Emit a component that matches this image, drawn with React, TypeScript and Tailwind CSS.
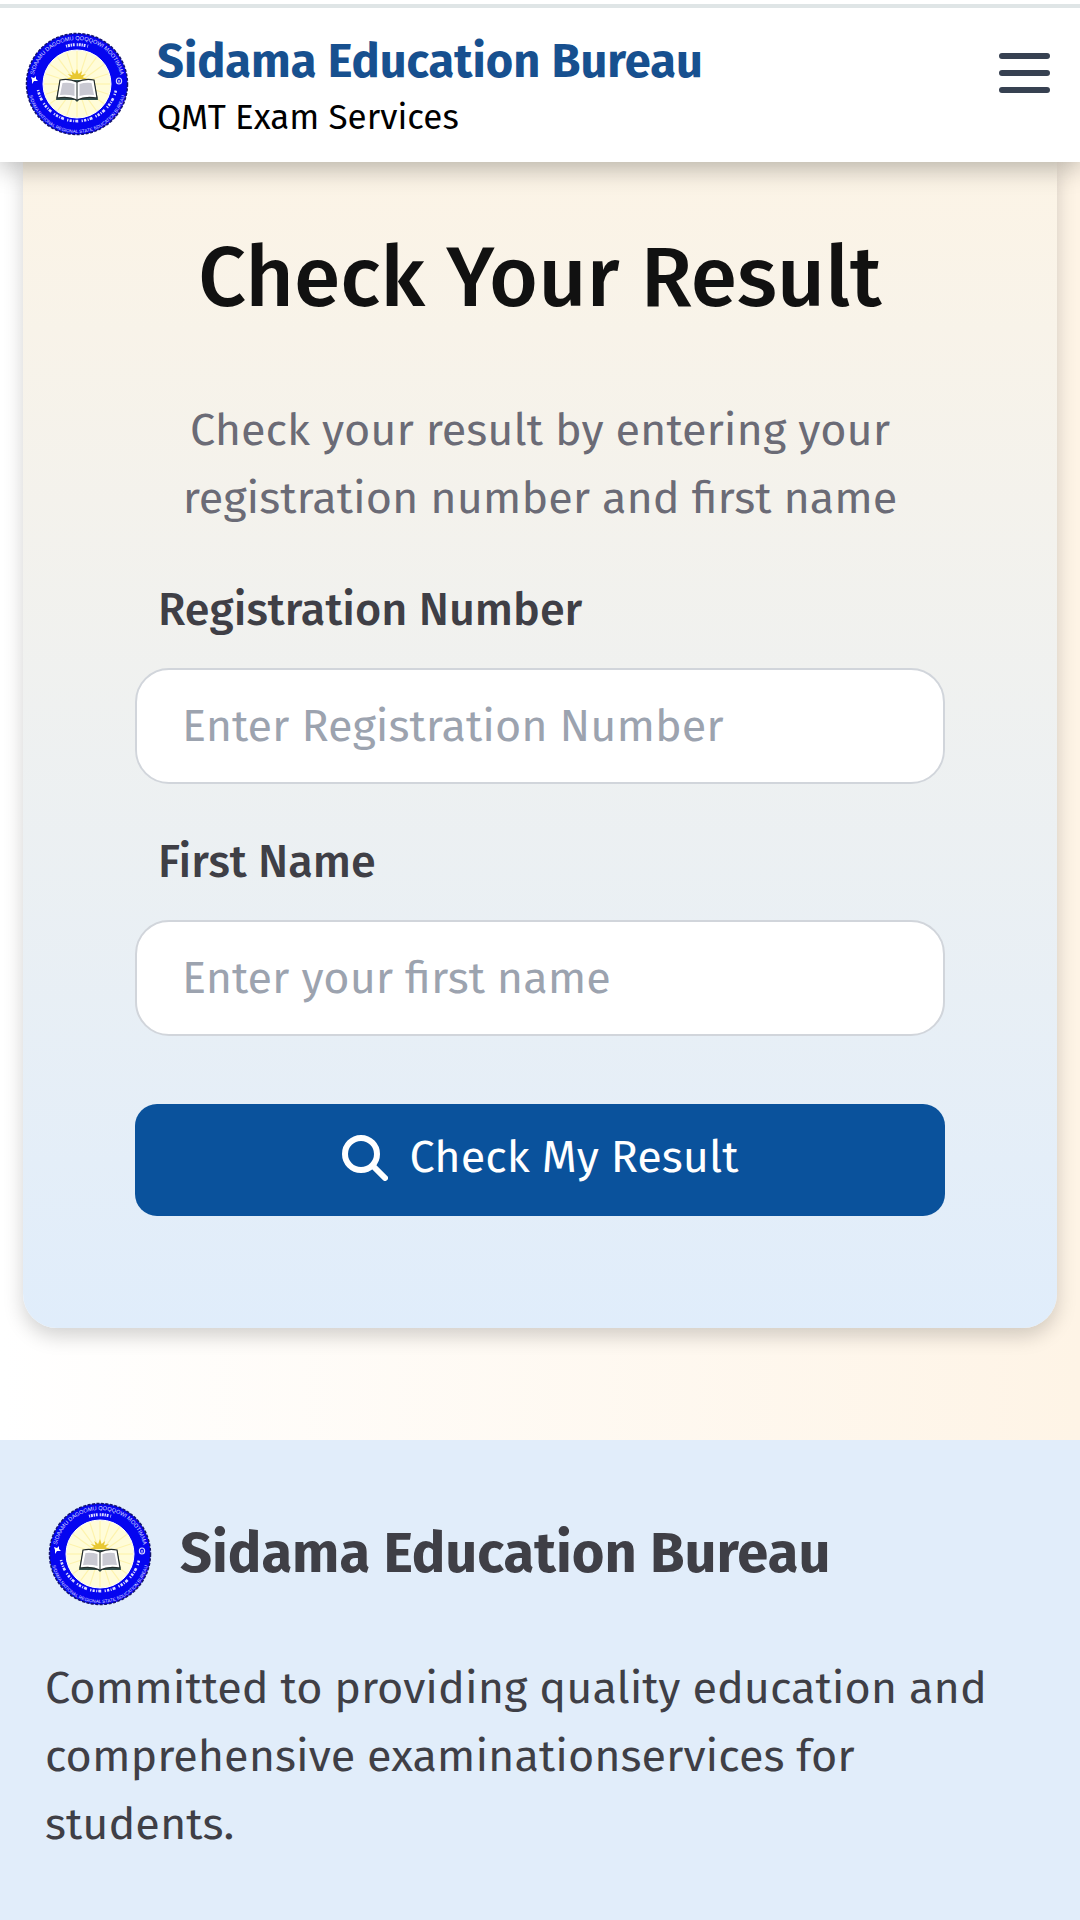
import { useState } from "react";

interface LogoProps {
  id: string;
}

const rays = [0, 18, 36, 54, 72, 90, 108, 126, 144, 162, 180, 198, 216, 234, 252, 270, 288, 306, 324, 342];

const Logo: React.FC<LogoProps> = ({ id }) => {
  return (
    <svg viewBox="0 0 104 104" className="size-26 shrink-0" aria-hidden="true">
      <defs>
        <path id={`${id}-top`} d="M8 52a44 44 0 0 1 88 0" />
        <path id={`${id}-bottom`} d="M3 52a49 49 0 0 0 98 0" />
      </defs>
      <circle cx="52" cy="52" r="50.5" fill="#0505f0" />
      <circle cx="52" cy="52" r="50.5" fill="none" stroke="#15156e" strokeWidth="1.5" strokeDasharray="3 1.5" />
      <circle cx="52" cy="52" r="34" fill="#fffcd9" stroke="#fff" strokeWidth="1" />
      {rays.map((a) => (
        <path key={a} d="M52 47V19" stroke="#fdf3ae" strokeWidth="1.2" transform={`rotate(${a} 52 52)`} />
      ))}
      <g fill="#dcdcff" fontFamily="Liberation Sans, sans-serif" fontWeight="400" textAnchor="middle">
        <text fontSize="5.6">
          <textPath href={`#${id}-top`} startOffset="50%">SIDAAMU DAGOOMU QOQQOWI MOOTIMMA</textPath>
        </text>
        <text fontSize="4.6">
          <textPath href={`#${id}-bottom`} startOffset="50%">SIDAMA NATIONAL REGIONAL STATE EDUCATION BUREAU</textPath>
        </text>
      </g>
      <path
        d="M41 14.2A39.5 39.5 0 0 1 63 14.2"
        fill="none"
        stroke="#dcdcff"
        strokeWidth="3"
        strokeDasharray="1.2 0.8 2 0.8 1.4 0.8 1.8 2"
      />
      <path
        d="M13 58A40 40 0 0 0 91 58"
        fill="none"
        stroke="#dcdcff"
        strokeWidth="2.6"
        strokeDasharray="1.2 1.3 2.2 1.4 1 1.1 3 3.4"
      />
      <path d="M6 45l3 1 2-2 0 3 2 2-4 0-2 3 0-4z" fill="#fff" />
      <ellipse cx="94" cy="49" rx="2.6" ry="3" fill="none" stroke="#d8d8ff" strokeWidth="1.2" />
      <path d="M93 49h2M94 48v3" stroke="#d8d8ff" strokeWidth="0.8" />
      <path
        d="M52 37l1.6 5 3.6-3-1.2 4.3 5-1.3-3.4 3.2 5 1.8H41.4l4.8-2-3.6-3 5 1.3-1.3-4.3 3.8 3z"
        fill="#e8c832"
      />
      <path d="M35 48l-4 20h19l2 2 2-2h19l-4-20z" fill="#35534f" />
      <path d="M35 48q9-2 17 2 8-4 17-2l3 18q-12-2-20 2-8-4-20-2z" fill="#fff" stroke="#232c2a" strokeWidth="1.2" />
      <path d="M37.5 51q6-1 12 1v12q-7-2-14.5-1zM66.5 51q-6-1-12 1v12q7-2 14.5-1z" fill="#c9c9d2" />
      <path d="M52 50v17" stroke="#232c2a" strokeWidth="1" />
    </svg>
  );
};

const Header = () => {
  return (
    <header className="relative z-10 flex items-start justify-between bg-white pt-6 pb-[18px] pl-[25px] pr-[30px] shadow-[0_6px_24px_rgba(0,0,0,0.28)]">
      <a href="#" className="flex items-start gap-7">
        <Logo id="header-logo" />
        <div>
          <p className="text-[47px] leading-[58px] font-bold text-[#17508f]">Sidama Education Bureau</p>
          <p className="text-[35px] leading-[54px] text-black">QMT Exam Services</p>
        </div>
      </a>
      <button type="button" aria-label="Open menu" className="mt-3 text-[#374151]">
        <svg viewBox="0 0 68 68" className="size-17 -mr-2" fill="none" stroke="currentColor" strokeWidth="6" strokeLinecap="round">
          <path d="M12 12h45M12 29h45M12 46h45" />
        </svg>
      </button>
    </header>
  );
};

const ResultForm = () => {
  const [regNumber, setRegNumber] = useState("");
  const [firstName, setFirstName] = useState("");

  const labelClass = "block px-[23px] text-[45px] leading-[68px] font-medium text-[#3f3f46]";
  const inputClass =
    "mt-6 w-full h-29 rounded-[34px] border-2 border-[#d1d5db] bg-white px-[45px] text-[45px] text-[#3f3f46] placeholder:text-[#9ca3af]";

  return (
    <section className="mx-[23px] rounded-b-[34px] bg-linear-to-b from-[#fcf4e6] to-[#e0edfb] px-28 pt-18 pb-28 shadow-[0_8px_20px_rgba(0,0,0,0.18)]">
      <h1 className="text-center text-[84px] leading-[88px] font-medium text-[#111111]">
        Check Your Result
      </h1>
      <p className="mt-[74px] text-center text-[45px] leading-[68px] text-[#6b6b76]">
        Check your result by entering your registration number and first name
      </p>
      <form className="mt-11" onSubmit={(e) => e.preventDefault()}>
        <label htmlFor="regNumber" className={labelClass}>
          Registration Number
        </label>
        <input
          id="regNumber"
          type="text"
          value={regNumber}
          onChange={(e) => setRegNumber(e.target.value)}
          placeholder="Enter Registration Number"
          className={inputClass}
        />
        <label htmlFor="firstName" className={`${labelClass} mt-11`}>
          First Name
        </label>
        <input
          id="firstName"
          type="text"
          value={firstName}
          onChange={(e) => setFirstName(e.target.value)}
          placeholder="Enter your first name"
          className={inputClass}
        />
        <button
          type="submit"
          className="mt-17 flex h-28 w-full items-center justify-center gap-[22px] rounded-[22px] bg-[#0a529c] pb-1 text-[45px] text-white"
        >
          <svg viewBox="0 0 46 46" className="size-[46px]" fill="none" stroke="currentColor" strokeWidth="6" strokeLinecap="round">
            <circle cx="19" cy="19" r="16" />
            <path d="M31 31l12 12" />
          </svg>
          Check My Result
        </button>
      </form>
    </section>
  );
};

const Footer = () => {
  return (
    <footer className="grow bg-[#e1edfa] px-[45px] pt-[62px] pb-17">
      <div className="flex items-center gap-7 pl-[3px]">
        <Logo id="footer-logo" />
        <h2 className="text-[56px] leading-[68px] font-bold text-[#3f3f46]">Sidama Education Bureau</h2>
      </div>
      <p className="mt-12 text-[45px] leading-[68px] text-[#3f3f46]">
        Committed to providing quality education and comprehensive examinationservices for students.
      </p>
    </footer>
  );
};

const App = () => {
  return (
    <div className="flex min-h-screen flex-col bg-white font-['Fira_Sans','Noto_Sans',sans-serif]">
      <div className="relative z-20 border-t-4 border-white">
        <div className="h-1 bg-[#dfe5e6]" />
      </div>
      <Header />
      <main className="bg-linear-to-r from-white to-[#fef4e6] pb-28">
        <ResultForm />
      </main>
      <Footer />
    </div>
  );
};

export default App;
